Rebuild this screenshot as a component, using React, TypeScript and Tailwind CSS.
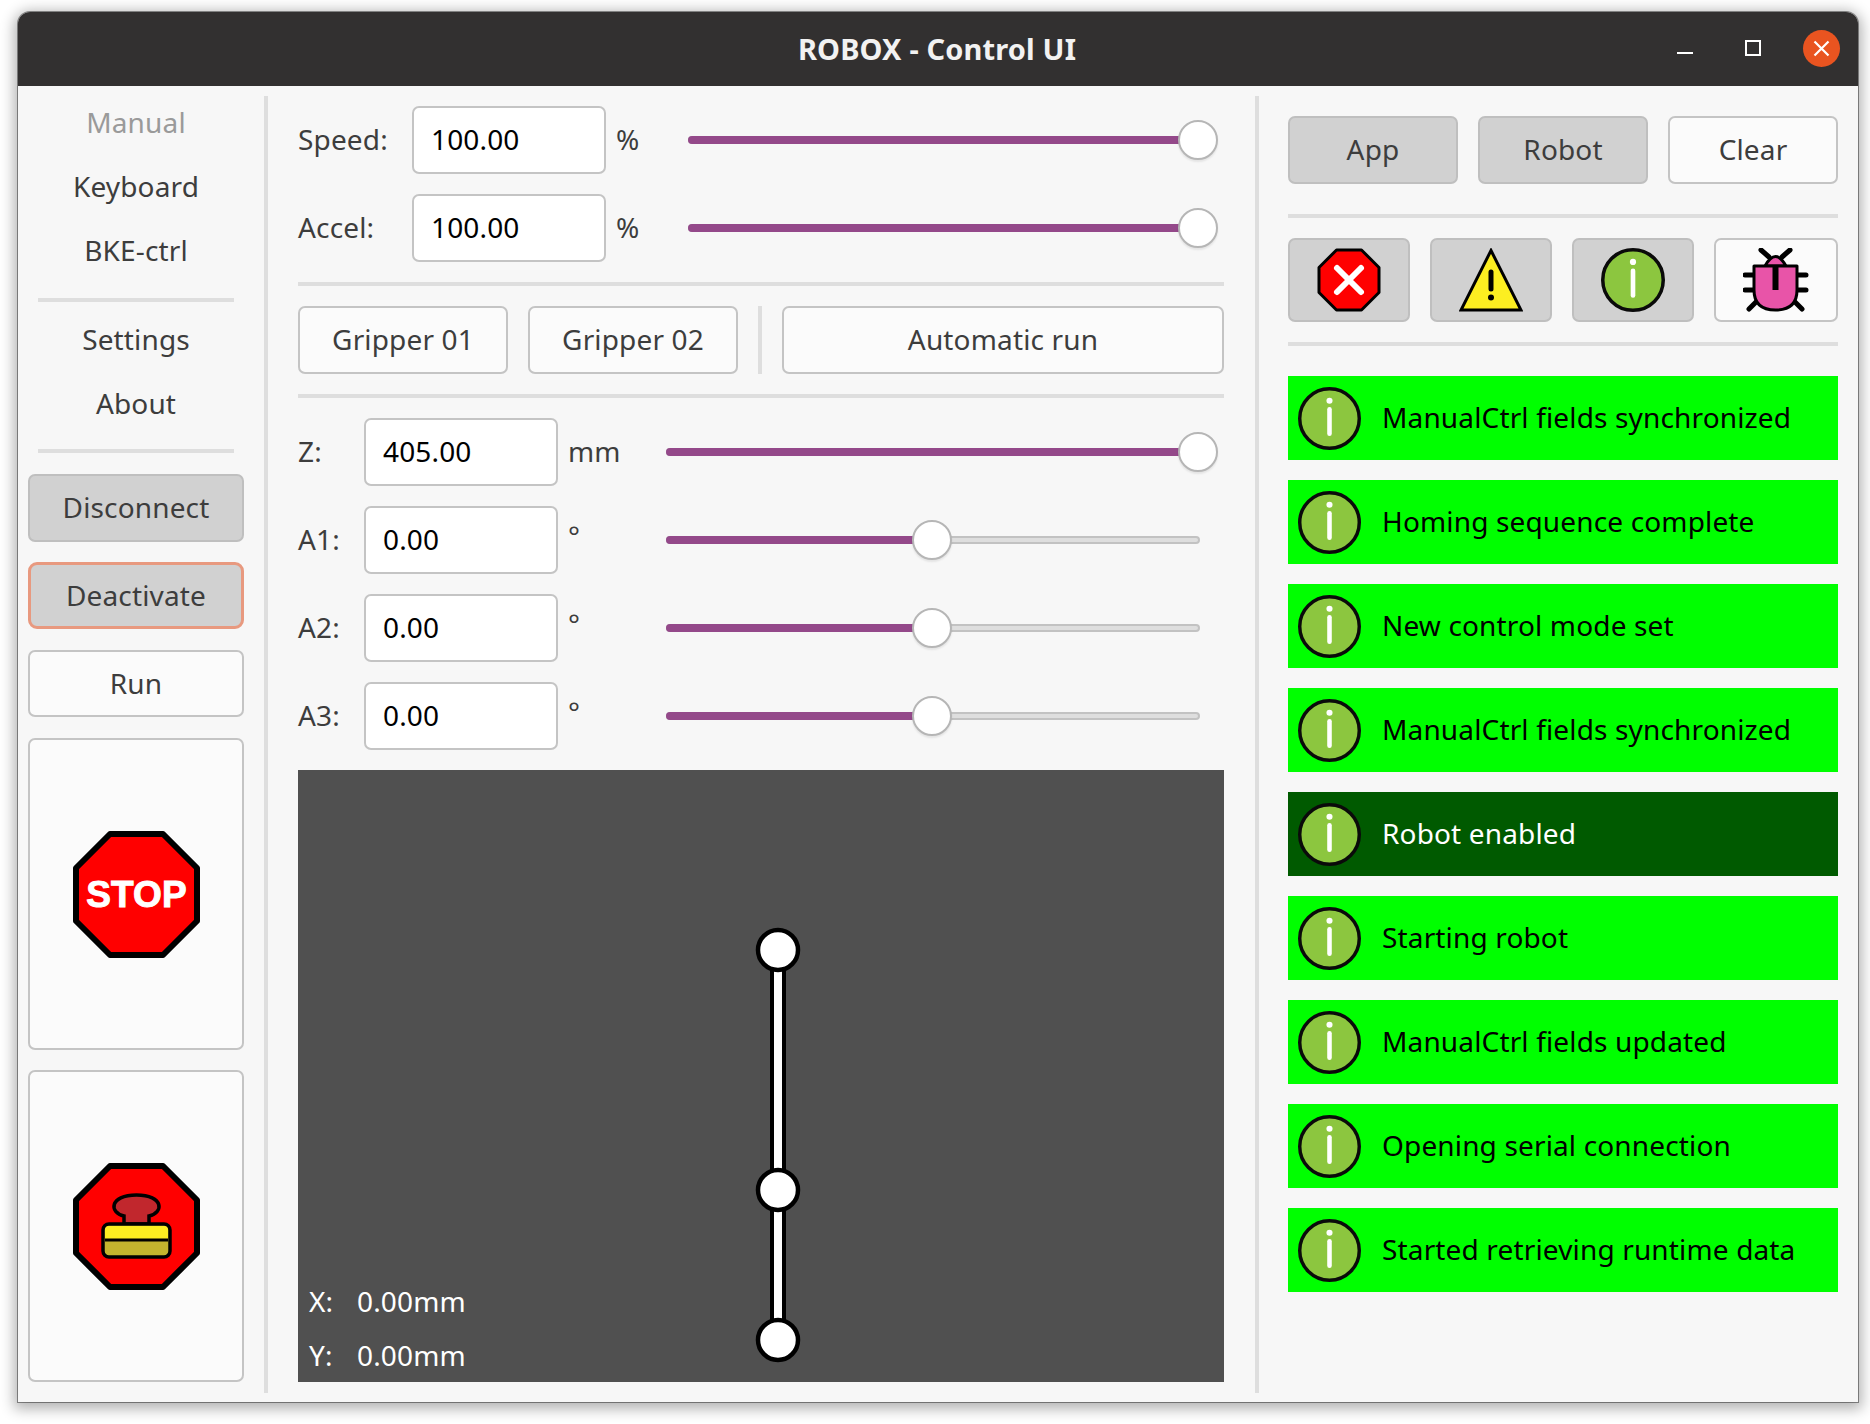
import React from "react";

const uiFont = "font-['Noto_Sans',sans-serif] tracking-[0.15px]";

function InfoIcon({ size = 63 }: { size?: number }) {
  return (
    <svg width={size} height={size} viewBox="0 0 62 62" className="shrink-0">
      <circle cx="31" cy="31" r="29.3" fill="#8cc63f" stroke="#0a0a0a" strokeWidth="3.4" />
      <circle cx="31" cy="13.5" r="3" fill="#fff" />
      <path d="M31 22 V46" stroke="#fff" strokeWidth="4.5" strokeLinecap="round" />
    </svg>
  );
}

function ErrorIcon() {
  return (
    <svg width="64" height="64" viewBox="0 0 64 64">
      <path d="M19.5 2 H44.5 L62 19.5 V44.5 L44.5 62 H19.5 L2 44.5 V19.5 Z" fill="#ff0000" stroke="#000" strokeWidth="3" strokeLinejoin="round" />
      <path d="M20 20 L44 44 M44 20 L20 44" stroke="#fff" strokeWidth="6" strokeLinecap="round" />
    </svg>
  );
}

function WarnIcon() {
  return (
    <svg width="64" height="64" viewBox="0 0 64 64">
      <path d="M32 2.5 L62 62 H2 Z" fill="#fcee21" stroke="#000" strokeWidth="3" strokeLinejoin="miter" />
      <path d="M32 24 V41" stroke="#000" strokeWidth="5" strokeLinecap="round" />
      <circle cx="32" cy="49.5" r="3" fill="#000" />
    </svg>
  );
}

function BugIcon() {
  return (
    <svg width="66" height="64" viewBox="0 0 66 64">
      <g stroke="#000" strokeWidth="5" strokeLinecap="round" fill="none">
        <path d="M18 2 L26 9 M47 2 L39 9" />
        <path d="M2 27 H11 M2 42 H11 M54 27 H63 M54 42 H63" />
        <path d="M6 61 L14 53 M59 61 L51 53" />
      </g>
      <path d="M22 18 Q32.5 -1 43 18 Z" fill="#e854a8" stroke="#000" strokeWidth="3" />
      <path d="M11 18 H54 V42 Q54 62 32.5 62 Q11 62 11 42 Z" fill="#e854a8" stroke="#000" strokeWidth="3" strokeLinejoin="round" />
      <path d="M32.5 18 V42" stroke="#000" strokeWidth="6" />
    </svg>
  );
}

function Octagon({ children }: { children?: React.ReactNode }) {
  return (
    <svg width="127" height="127" viewBox="0 0 127 127">
      <path d="M37 3 H90 L124 37 V90 L90 124 H37 L3 90 V37 Z" fill="#ff0000" stroke="#000" strokeWidth="6" strokeLinejoin="round" />
      {children}
    </svg>
  );
}

function StopIcon() {
  return (
    <Octagon>
      <text x="63.5" y="76" textAnchor="middle" fill="#fff" stroke="#fff" strokeWidth="1" fontFamily="'Liberation Sans',sans-serif" fontWeight="700" fontSize="37">
        STOP
      </text>
    </Octagon>
  );
}

function EStopIcon() {
  return (
    <Octagon>
      <path d="M51 61 V53 C36 50 36 32 63.5 32 C91 32 91 50 76 53 V61 Z" fill="#c1272d" stroke="#000" strokeWidth="3.5" />
      <rect x="30" y="61" width="67" height="33" rx="6" fill="#c4b42e" stroke="#000" strokeWidth="3.5" />
      <path d="M32 66 a4 4 0 0 1 4 -3 H91 a4 4 0 0 1 4 3 V76 H32 Z" fill="#fcee21" />
      <path d="M32 77 H95" stroke="#000" strokeWidth="3" />
    </Octagon>
  );
}

function Btn({ active, className, children }: { active?: boolean; className: string; children: React.ReactNode }) {
  return (
    <button
      type="button"
      className={`flex items-center justify-center rounded-[7px] text-[#3d3d3d] text-[28px] ${active ? "bg-[#d1d1d1]" : "bg-[#fbfbfb]"} ${className}`}
    >
      {typeof children === "string" ? <span className="pb-[2px]">{children}</span> : children}
    </button>
  );
}

function NavItem({ children, muted }: { children: string; muted?: boolean }) {
  return (
    <div className={`h-[64px] pb-[2px] flex items-center justify-center ${muted ? "text-[#9a9a9a]" : ""}`}>{children}</div>
  );
}

function Slider({ value, width }: { value: number; width: number }) {
  // thumb centre runs from the left end to 2px short of the right end
  const thumbX = (value / 100) * (width - 2);
  return (
    <div className="relative h-[38px] flex items-center" style={{ width }}>
      <div className="h-[8px] w-full rounded-full bg-[#dedede] border-2 border-[#c2c2c2]" />
      <div className="absolute left-0 h-[8px] rounded-l-full bg-[#94498a]" style={{ width: thumbX }} />
      <div
        className="absolute -top-[1px] size-[40px] rounded-full bg-white border-2 border-[#b6b6b6] shadow-[0_2px_2px_rgba(0,0,0,0.08)]"
        style={{ left: thumbX - 20 }}
      />
    </div>
  );
}

function NumberRow({ label, value, unit, pct, labelW, unitW, sliderW }: {
  label: string; value: string; unit: string; pct: number; labelW: string; unitW: string; sliderW: number;
}) {
  return (
    <div className="flex items-center h-[68px] text-[28px] text-[#3d3d3d]">
      <span className={`${labelW} pb-[2px]`}>{label}</span>
      <input
        readOnly
        value={value}
        className="w-[194px] h-[68px] rounded-[7px] border-2 border-[#c4c4c4] bg-white pl-[17px] pb-[2px] text-black outline-none"
      />
      <span className={`${unitW} pl-[10px] pb-[2px] ${unit === "°" ? "-mt-[8px]" : ""}`}>{unit}</span>
      <Slider value={pct} width={sliderW} />
    </div>
  );
}

function Message({ text, selected }: { text: string; selected?: boolean }) {
  return (
    <div className={`flex items-center h-[84px] pl-[10px] gap-[21px] text-[28px] ${selected ? "bg-[#005a00] text-white" : "bg-[#00ff00] text-black"}`}>
      <InfoIcon />
      <span className="pb-[2px]">{text}</span>
    </div>
  );
}

const messages = [
  "ManualCtrl fields synchronized",
  "Homing sequence complete",
  "New control mode set",
  "ManualCtrl fields synchronized",
  "Robot enabled",
  "Starting robot",
  "ManualCtrl fields updated",
  "Opening serial connection",
  "Started retrieving runtime data",
];

function Hr({ className }: { className: string }) {
  return <div className={`h-[4px] bg-[#dedede] ${className}`} />;
}

const plain = "border-2 border-[#c4c4c4]";
const grey = "border-2 border-[#bfbfbf]";

export default function App() {
  return (
    <div className={`w-[1870px] h-[1424px] pt-[12px] pl-[18px] bg-white ${uiFont}`}>
      <div className="w-[1840px] h-[1390px] flex flex-col rounded-t-[12px] bg-[#f7f7f7] shadow-[0_0_0_1px_rgba(0,0,0,0.4),0_3px_14px_4px_rgba(0,0,0,0.3)] overflow-hidden">
        <div className="h-[74px] shrink-0 grid grid-cols-[1fr_auto_1fr] items-center bg-[#323030]">
          <div />
          <div className="text-[29px] font-bold text-[#f2f2f2] -ml-[2px]">ROBOX - Control UI</div>
          <div className="flex items-center justify-end pr-[18px] gap-[52px] text-white">
            <div className="w-[16px] h-[2px] bg-white mt-[8px]" />
            <div className="size-[16px] border-2 border-white -mt-[2px]" />
            <div className="size-[37px] rounded-full bg-[#e95420] flex items-center justify-center -mt-[2px] -ml-[10px]">
              <svg width="17" height="17" viewBox="0 0 17 17">
                <path d="M1.5 1.5 L15.5 15.5 M15.5 1.5 L1.5 15.5" stroke="#fff" strokeWidth="2.2" />
              </svg>
            </div>
          </div>
        </div>

        <div className="flex-1 flex pt-[10px] pb-[9px]">
          {/* left nav */}
          <div className="w-[246px] shrink-0 pl-[10px] pr-[20px] flex flex-col items-stretch text-[28px] text-[#3d3d3d]">
            <div className="-mt-[5px]"><NavItem muted>Manual</NavItem></div>
            <NavItem>Keyboard</NavItem>
            <NavItem>BKE-ctrl</NavItem>
            <Hr className="mt-[15px] mx-[10px]" />
            <div className="mt-[6px]"><NavItem>Settings</NavItem></div>
            <NavItem>About</NavItem>
            <Hr className="mt-[13px] mx-[10px]" />
            <Btn active className={`mt-[21px] h-[68px] ${grey}`}>Disconnect</Btn>
            <Btn active className="mt-[20px] h-[67px] border-[3px] border-[#e8997f] rounded-[9px]">Deactivate</Btn>
            <Btn className={`mt-[21px] h-[67px] ${plain}`}>Run</Btn>
            <Btn className={`mt-[21px] h-[312px] ${plain}`}><StopIcon /></Btn>
            <Btn className={`mt-[20px] h-[312px] ${plain}`}><EStopIcon /></Btn>
          </div>
          <div className="w-[4px] shrink-0 bg-[#dedede]" />

          {/* middle */}
          <div className="w-[987px] shrink-0 pl-[30px] pr-[31px] flex flex-col">
            <div className="mt-[10px] flex flex-col gap-[20px]">
              <NumberRow label="Speed:" value="100.00" unit="%" pct={100} labelW="w-[114px]" unitW="w-[82px]" sliderW={512} />
              <NumberRow label="Accel:" value="100.00" unit="%" pct={100} labelW="w-[114px]" unitW="w-[82px]" sliderW={512} />
            </div>
            <Hr className="mt-[20px]" />
            <div className="mt-[20px] h-[68px] flex items-stretch">
              <Btn className={`w-[210px] ${plain}`}>Gripper 01</Btn>
              <Btn className={`w-[210px] ml-[20px] ${plain}`}>Gripper 02</Btn>
              <div className="w-[4px] ml-[20px] bg-[#dedede]" />
              <Btn className={`flex-1 ml-[20px] ${plain}`}>Automatic run</Btn>
            </div>
            <Hr className="mt-[20px]" />
            <div className="mt-[20px] flex flex-col gap-[20px]">
              <NumberRow label="Z:" value="405.00" unit="mm" pct={100} labelW="w-[66px]" unitW="w-[108px]" sliderW={534} />
              <NumberRow label="A1:" value="0.00" unit="°" pct={50} labelW="w-[66px]" unitW="w-[108px]" sliderW={534} />
              <NumberRow label="A2:" value="0.00" unit="°" pct={50} labelW="w-[66px]" unitW="w-[108px]" sliderW={534} />
              <NumberRow label="A3:" value="0.00" unit="°" pct={50} labelW="w-[66px]" unitW="w-[108px]" sliderW={534} />
            </div>
            <div className="relative mt-[20px] h-[612px] bg-[#505050] text-[28px] text-white">
              <svg width="926" height="612" viewBox="0 0 926 612" className="absolute inset-0">
                <path d="M480 180 V570" stroke="#000" strokeWidth="16" />
                <path d="M480 180 V570" stroke="#fff" strokeWidth="8" />
                <circle cx="480" cy="180" r="20" fill="#fff" stroke="#000" strokeWidth="4.5" />
                <circle cx="480" cy="420" r="20" fill="#fff" stroke="#000" strokeWidth="4.5" />
                <circle cx="480" cy="570" r="20" fill="#fff" stroke="#000" strokeWidth="4.5" />
              </svg>
              <div className="absolute left-[11px] bottom-0 flex flex-col">
                <div className="flex h-[54px] items-center"><span className="w-[48px]">X:</span><span>0.00mm</span></div>
                <div className="flex h-[54px] items-center"><span className="w-[48px]">Y:</span><span>0.00mm</span></div>
              </div>
            </div>
          </div>
          <div className="w-[4px] shrink-0 bg-[#dedede]" />

          {/* right log */}
          <div className="flex-1 pl-[29px] pr-[20px] flex flex-col">
            <div className="mt-[20px] flex gap-[20px] h-[68px]">
              <Btn active className={`flex-1 ${grey}`}>App</Btn>
              <Btn active className={`flex-1 ${grey}`}>Robot</Btn>
              <Btn className={`flex-1 ${plain}`}>Clear</Btn>
            </div>
            <Hr className="mt-[30px]" />
            <div className="mt-[20px] flex gap-[20px] h-[84px]">
              <Btn active className={`w-[122px] ${grey}`}><ErrorIcon /></Btn>
              <Btn active className={`w-[122px] ${grey}`}><WarnIcon /></Btn>
              <Btn active className={`w-[122px] ${grey}`}><InfoIcon size={64} /></Btn>
              <Btn className={`w-[124px] ${plain}`}><BugIcon /></Btn>
            </div>
            <Hr className="mt-[20px]" />
            <div className="mt-[30px] flex flex-col gap-[20px]">
              {messages.map((m, i) => (
                <Message key={i} text={m} selected={m === "Robot enabled"} />
              ))}
            </div>
          </div>
        </div>
      </div>
    </div>
  );
}
